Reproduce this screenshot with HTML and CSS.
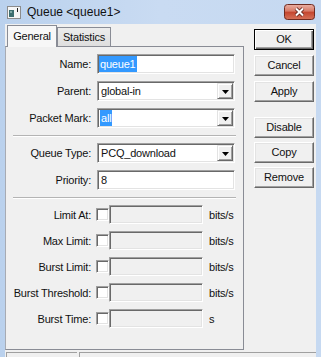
FILE: index.html
```html
<!DOCTYPE html>
<html lang="en">
<head>
    <meta charset="UTF-8">
    <title>Queue &lt;queue1&gt;</title>
    <link rel="stylesheet" href="styles.css">
</head>
<body>
    <div class="window">
        <div class="titlebar">
            <svg class="app-icon" width="14" height="13" viewBox="0 0 14 13">
                <rect x="0.5" y="0.5" width="13" height="12" fill="#f6f6f6" stroke="#8c8c8c"/>
                <rect x="2" y="4" width="5" height="7" fill="#3d6f70"/>
                <rect x="3" y="5" width="2" height="2" fill="#7fa9a6"/>
                <rect x="10" y="2" width="1" height="4" fill="#222"/>
            </svg>
            <span class="title">Queue &lt;queue1&gt;</span>
            <svg class="close" width="31" height="16" viewBox="0 0 31 16">
                <defs>
                    <linearGradient id="closegrad" x1="0" y1="0" x2="0" y2="1">
                        <stop offset="0" stop-color="#eab0a4"/>
                        <stop offset="0.45" stop-color="#d77a66"/>
                        <stop offset="0.5" stop-color="#c4452e"/>
                        <stop offset="1" stop-color="#d6735a"/>
                    </linearGradient>
                </defs>
                <rect x="0.5" y="0.5" width="30" height="15" rx="3" fill="url(#closegrad)" stroke="#6e2b20"/>
                <path d="M12 4.5 L19 11.5 M19 4.5 L12 11.5" stroke="#5a2018" stroke-width="3.6"/>
                <path d="M12 4.5 L19 11.5 M19 4.5 L12 11.5" stroke="#fff" stroke-width="2"/>
            </svg>
        </div>

        <div class="client">
            <div class="top">
                <div class="main">
                    <div class="tabs">
                        <div class="tab active">General</div>
                        <div class="tab">Statistics</div>
                    </div>
                    <div class="panel">
                        <div class="row">
                            <span class="label">Name:</span>
                            <div class="field"><span class="sel">queue1</span></div>
                        </div>
                        <div class="row">
                            <span class="label">Parent:</span>
                            <div class="field select"><span class="value">global-in</span><span class="drop"><svg width="7" height="4" viewBox="0 0 7 4"><polygon points="0,0 7,0 3.5,4" fill="#000"/></svg></span></div>
                        </div>
                        <div class="row">
                            <span class="label">Packet Mark:</span>
                            <div class="field select"><span class="value"><span class="sel">all</span></span><span class="drop"><svg width="7" height="4" viewBox="0 0 7 4"><polygon points="0,0 7,0 3.5,4" fill="#000"/></svg></span></div>
                        </div>

                        <div class="sep"></div>

                        <div class="row">
                            <span class="label">Queue Type:</span>
                            <div class="field select"><span class="value">PCQ_download</span><span class="drop"><svg width="7" height="4" viewBox="0 0 7 4"><polygon points="0,0 7,0 3.5,4" fill="#000"/></svg></span></div>
                        </div>
                        <div class="row">
                            <span class="label">Priority:</span>
                            <div class="field"><span class="value">8</span></div>
                        </div>

                        <div class="sep"></div>

                        <div class="row small">
                            <span class="label">Limit At:</span>
                            <span class="check"></span>
                            <div class="field disabled"></div>
                            <span class="unit">bits/s</span>
                        </div>
                        <div class="row small">
                            <span class="label">Max Limit:</span>
                            <span class="check"></span>
                            <div class="field disabled"></div>
                            <span class="unit">bits/s</span>
                        </div>
                        <div class="row small">
                            <span class="label">Burst Limit:</span>
                            <span class="check"></span>
                            <div class="field disabled"></div>
                            <span class="unit">bits/s</span>
                        </div>
                        <div class="row small">
                            <span class="label">Burst Threshold:</span>
                            <span class="check"></span>
                            <div class="field disabled"></div>
                            <span class="unit">bits/s</span>
                        </div>
                        <div class="row small">
                            <span class="label">Burst Time:</span>
                            <span class="check"></span>
                            <div class="field disabled"></div>
                            <span class="unit">s</span>
                        </div>
                    </div>
                </div>

                <div class="buttons">
                    <div class="btn default">OK</div>
                    <div class="btn">Cancel</div>
                    <div class="btn group-end">Apply</div>
                    <div class="btn tight">Disable</div>
                    <div class="btn tight">Copy</div>
                    <div class="btn">Remove</div>
                </div>
            </div>

            <div class="status">
                <div class="cell first">disabled</div>
                <div class="cell"></div>
            </div>
        </div>
    </div>
</body>
</html>
```

FILE: styles.css
```css
* {
    box-sizing: border-box;
}
body {
    margin: 0;
    font-family: "Liberation Sans", Arial, sans-serif;
    font-size: 11px;
    letter-spacing: -0.2px;
    color: #111;
    background: #c4d8f0;
    overflow: hidden;
}
.window {
    width: 321px;
    height: 357px;
    background: linear-gradient(to right, #bad1ed, #c9dbf2 50%, #c6d9f1);
    display: flex;
    flex-direction: column;
}

/* title bar */
.titlebar {
    height: 24px;
    flex: none;
    display: flex;
    align-items: center;
    padding-left: 7px;
}
.app-icon {
    margin-right: 6px;
    margin-top: 1px;
}
.title {
    font-size: 12px;
    letter-spacing: 0;
    padding-bottom: 1px;
}
.close {
    margin-left: auto;
    margin-right: 6px;
    align-self: flex-start;
    margin-top: 4px;
}

/* client area */
.client {
    flex: 1;
    margin: 0 5px;
    background: #f0f0f0;
    display: flex;
    flex-direction: column;
}
.top {
    display: flex;
    height: 326px;
}
.main {
    width: 239px;
    display: flex;
    flex-direction: column;
}

/* tabs */
.tabs {
    height: 22px;
    display: flex;
    align-items: flex-end;
    padding-left: 2px;
}
.tab {
    height: 19px;
    width: 54px;
    border: 1px solid #898c95;
    border-bottom: none;
    background: linear-gradient(#ececec, #dedede);
    text-align: center;
    line-height: 18px;
}
.tab.active {
    position: relative;
    width: 50px;
    height: 22px;
    margin-bottom: -1px;
    background: #f7f7f7;
    line-height: 20px;
}
.panel {
    flex: 1;
    border: 1px solid #898c95;
    border-left-color: #a7abb3;
    padding-top: 7px;
}

/* form rows */
.row {
    display: flex;
    align-items: center;
    height: 20px;
    margin-bottom: 7px;
}
.row.small {
    height: 19px;
}
.label {
    width: 86px;
    text-align: right;
    padding-right: 1px;
    white-space: nowrap;
}
.field {
    width: 138px;
    height: 100%;
    margin-left: 5px;
    background: #fff;
    border: 1px solid;
    border-color: #a0a0a0 #fff #fff #a0a0a0;
    box-shadow: inset 1px 1px #696969, inset -1px -1px #e3e3e3;
    padding: 1px 1px 1px 2px;
    display: flex;
    align-items: center;
}
.field .value {
    flex: 1;
    padding-left: 1px;
    display: flex;
    align-items: center;
    height: 100%;
}
.field.select {
    padding-right: 1px;
}
.sel {
    background: #3399ff;
    color: #fff;
    height: 16px;
    line-height: 16px;
    padding: 0 1px;
    margin-left: -1px;
}
.drop {
    width: 16px;
    height: 16px;
    background: #f0f0f0;
    border: 1px solid;
    border-color: #e3e3e3 #696969 #696969 #e3e3e3;
    box-shadow: inset 1px 1px #fff, inset -1px -1px #a0a0a0;
    display: flex;
    align-items: center;
    justify-content: center;
}
.drop svg {
    display: block;
    margin-top: 1px;
}
.field.disabled {
    width: 94px;
    margin-left: 0;
    background: #f0f0f0;
}
.check {
    width: 13px;
    height: 13px;
    margin-left: 4px;
    background: #fff;
    border: 1px solid;
    border-color: #a0a0a0 #fff #fff #a0a0a0;
    box-shadow: inset 1px 1px #696969, inset -1px -1px #e3e3e3;
}
.unit {
    margin-left: 6px;
}
.sep {
    height: 2px;
    margin: 2px 7px 6px 7px;
    border-top: 1px solid #b4b4b4;
    border-bottom: 1px solid #fff;
}

/* right hand buttons */
.buttons {
    width: 60px;
    margin-left: 10px;
    padding-top: 5px;
    display: flex;
    flex-direction: column;
}
.btn {
    height: 21px;
    margin-bottom: 5px;
    background: #f0f0f0;
    border: 1px solid;
    border-color: #fff #696969 #696969 #fff;
    box-shadow: inset -1px -1px #a0a0a0, inset 1px 1px #e3e3e3;
    text-align: center;
    line-height: 19px;
}
.btn.default {
    border-color: #000;
    box-shadow: inset 1px 1px #fff, inset -1px -1px #696969, inset -2px -2px #a0a0a0;
}
.btn.group-end {
    margin-bottom: 15px;
}
.btn.tight {
    margin-bottom: 4px;
}

/* status bar */
.status {
    flex: 1;
    display: flex;
    padding-top: 2px;
    overflow: hidden;
}
.cell {
    flex: 1;
    margin-left: 2px;
    border-top: 1px solid #a0a0a0;
    border-left: 1px solid #a0a0a0;
    padding: 2px 0 0 3px;
    line-height: 13px;
}
.cell.first {
    flex: none;
    width: 71px;
    margin-left: 1px;
}
```
